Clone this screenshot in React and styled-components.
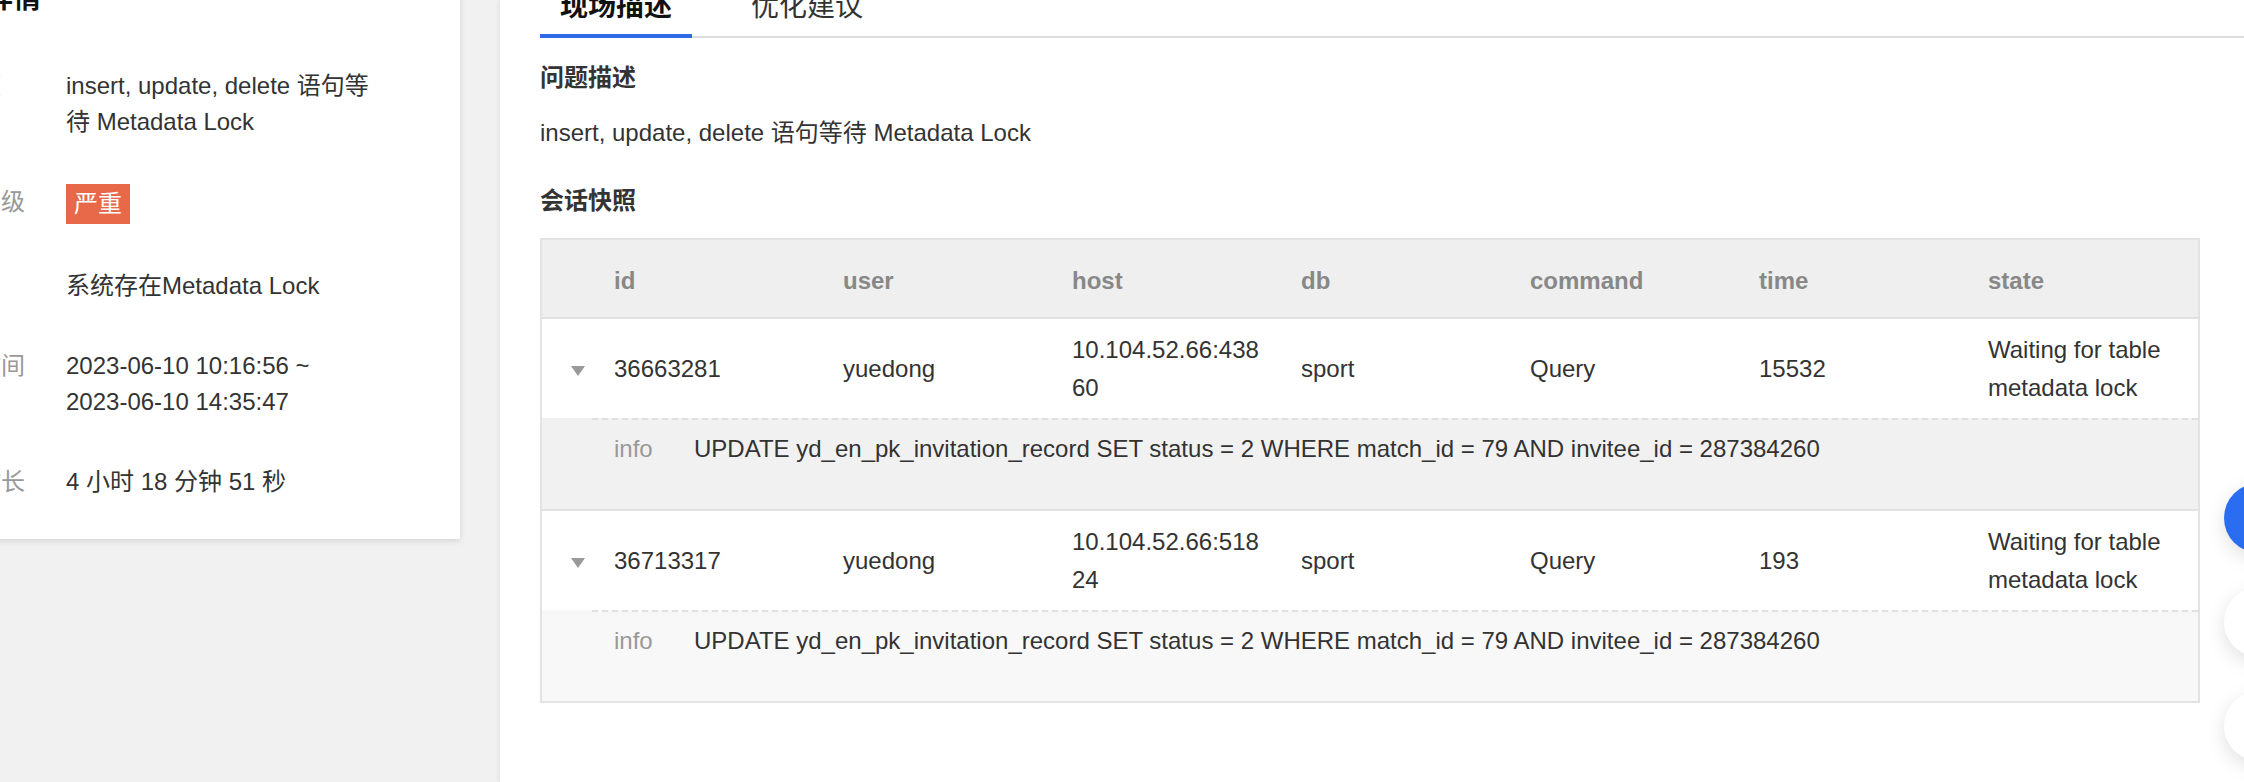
import React from 'react';
import styled, { createGlobalStyle } from 'styled-components';

const GlobalStyle = createGlobalStyle`
  html, body {
    margin: 0;
    padding: 0;
    background: #f1f1f1;
    overflow: hidden;
  }
  body {
    font-family: "Liberation Sans", "Noto Sans CJK SC", sans-serif;
    color: #333;
  }
`;

const details = [
  { label: '诊断项', value: ['insert, update, delete 语句等待 Metadata Lock'] },
  { label: '严重等级', badge: '严重' },
  { label: '描述', value: ['系统存在Metadata Lock'] },
  { label: '发生时间', value: ['2023-06-10 10:16:56 ~', '2023-06-10 14:35:47'], nowrap: true },
  { label: '持续时长', value: ['4 小时 18 分钟 51 秒'] },
];

const columns = ['id', 'user', 'host', 'db', 'command', 'time', 'state'];

const sessions = [
  {
    id: '36663281',
    user: 'yuedong',
    host: '10.104.52.66:43860',
    db: 'sport',
    command: 'Query',
    time: '15532',
    state: 'Waiting for table metadata lock',
    info: 'UPDATE yd_en_pk_invitation_record SET status = 2 WHERE match_id = 79 AND invitee_id = 287384260',
  },
  {
    id: '36713317',
    user: 'yuedong',
    host: '10.104.52.66:51824',
    db: 'sport',
    command: 'Query',
    time: '193',
    state: 'Waiting for table metadata lock',
    info: 'UPDATE yd_en_pk_invitation_record SET status = 2 WHERE match_id = 79 AND invitee_id = 287384260',
  },
];

const App = () => {
  return (
    <Page>
      <GlobalStyle />
      <Sidebar>
        <Card>
          <CardTitle>事件详情</CardTitle>
          <InfoList>
            {details.map((d) => (
              <InfoRow key={d.label}>
                <InfoLabel>{d.label}</InfoLabel>
                {d.badge ? (
                  <Badge>{d.badge}</Badge>
                ) : (
                  <InfoValue>
                    {d.value.map((part, i) => (
                      <React.Fragment key={i}>
                        {i > 0 && ' '}
                        <Part $nowrap={d.nowrap}>{part}</Part>
                      </React.Fragment>
                    ))}
                  </InfoValue>
                )}
              </InfoRow>
            ))}
          </InfoList>
        </Card>
      </Sidebar>

      <Main>
        <TabBar>
          <Tab $active>现场描述</Tab>
          <Tab>优化建议</Tab>
        </TabBar>

        <SectionTitle style={{ marginTop: 22 }}>问题描述</SectionTitle>
        <Paragraph>insert, update, delete 语句等待 Metadata Lock</Paragraph>
        <SectionTitle style={{ marginTop: 32 }}>会话快照</SectionTitle>

        <Table>
          <HeadRow>
            <Cell />
            {columns.map((c) => (
              <HeadCell key={c}>{c}</HeadCell>
            ))}
          </HeadRow>
          {sessions.map((s, i) => (
            <React.Fragment key={s.id}>
              <DataRow>
                <ExpandCell>
                  <Caret />
                </ExpandCell>
                {columns.map((c) => (
                  <Cell key={c}>{s[c]}</Cell>
                ))}
              </DataRow>
              <DetailRow $last={i === sessions.length - 1} $hover={i === 0}>
                <DetailInner>
                  <DetailLabel>info</DetailLabel>
                  <DetailText>{s.info}</DetailText>
                </DetailInner>
              </DetailRow>
            </React.Fragment>
          ))}
        </Table>
      </Main>

      <FabStack>
        <Fab $primary />
        <Fab />
        <Fab />
      </FabStack>
    </Page>
  );
};

const Page = styled.div`
  display: flex;
  height: 782px;
`;

const Sidebar = styled.aside`
  width: 500px;
  flex-shrink: 0;
`;

const Card = styled.section`
  box-sizing: border-box;
  width: 563px;
  margin: -40px 0 0 -103px;
  padding: 18px 0 39px 32px;
  background: #fff;
  box-shadow: 0 2px 6px rgba(0, 0, 0, 0.12);
`;

const CardTitle = styled.h2`
  margin: 0;
  font-size: 28px;
  line-height: 42px;
  font-weight: bold;
  color: #111;
`;

const InfoList = styled.div`
  display: flex;
  flex-direction: column;
  gap: 44px;
  margin-top: 48px;
`;

const InfoRow = styled.div`
  display: grid;
  grid-template-columns: 137px 315px;
  align-items: start;
  font-size: 24px;
  line-height: 36px;
`;

const InfoLabel = styled.div`
  color: #999;
  white-space: nowrap;
`;

const InfoValue = styled.div`
  color: #333;
`;

const Part = styled.span`
  white-space: ${(p) => (p.$nowrap ? 'nowrap' : 'normal')};
`;

const Badge = styled.span`
  justify-self: start;
  height: 40px;
  line-height: 40px;
  padding: 0 8px;
  background: #e8694a;
  color: #fff;
  font-size: 24px;
`;

const Main = styled.main`
  flex: 1;
  min-width: 0;
  background: #fff;
  padding-left: 40px;
  box-shadow: -2px 0 4px rgba(0, 0, 0, 0.05);
`;

const TabBar = styled.div`
  display: flex;
  gap: 39px;
  margin-top: -20px;
  border-bottom: 2px solid #dcdcdc;
`;

const Tab = styled.div`
  width: 152px;
  height: 54px;
  line-height: 54px;
  margin-bottom: -2px;
  text-align: center;
  font-size: 28px;
  font-weight: ${(p) => (p.$active ? 'bold' : 'normal')};
  color: ${(p) => (p.$active ? '#111' : '#333')};
  border-bottom: 4px solid ${(p) => (p.$active ? '#2d6ae3' : 'transparent')};
`;

const SectionTitle = styled.h3`
  margin: 0;
  font-size: 24px;
  line-height: 36px;
  font-weight: bold;
  color: #333;
`;

const Paragraph = styled.p`
  margin: 19px 0 0;
  font-size: 24px;
  line-height: 36px;
  color: #333;
`;

const Table = styled.div`
  margin: 19px 44px 0 0;
  border: 2px solid #e3e3e3;
  font-size: 24px;
  line-height: 38px;
  color: #333;
`;

const grid = `
  display: grid;
  grid-template-columns: 58px repeat(6, 229px) 1fr;
  align-items: center;
`;

const HeadRow = styled.div`
  ${grid}
  height: 73px;
  padding-top: 4px;
  background: #efefef;
  border-bottom: 2px solid #e0e0e0;
`;

const HeadCell = styled.div`
  padding: 0 20px 0 14px;
  font-weight: bold;
  color: #888;
`;

const DataRow = styled.div`
  ${grid}
  height: 99px;
  background: #fff;
`;

const Cell = styled.div`
  padding: 0 20px 0 14px;
  word-break: break-all;
`;

const ExpandCell = styled.div`
  padding-left: 29px;
  display: flex;
  align-items: center;
`;

const Caret = styled.span`
  width: 0;
  height: 0;
  margin-top: 4px;
  border-left: 7px solid transparent;
  border-right: 7px solid transparent;
  border-top: 10px solid #999;
`;

const DetailRow = styled.div`
  padding-left: 50px;
  background: ${(p) => (p.$hover ? '#f1f1f1' : '#f8f8f8')};
  border-bottom: ${(p) => (p.$last ? 'none' : '2px solid #e3e3e3')};
`;

const DetailInner = styled.div`
  display: flex;
  padding: 10px 0 41px 22px;
  border-top: 2px dashed #e0e0e0;
`;

const DetailLabel = styled.span`
  width: 80px;
  flex-shrink: 0;
  color: #999;
`;

const DetailText = styled.span`
  color: #333;
`;

const FabStack = styled.div`
  position: fixed;
  top: 483px;
  right: -50px;
  display: flex;
  flex-direction: column;
  gap: 34px;
`;

const Fab = styled.div`
  width: 70px;
  height: 70px;
  border-radius: 50%;
  background: ${(p) => (p.$primary ? '#2a6df0' : '#fff')};
  box-shadow: 0 6px 20px rgba(0, 0, 0, 0.12);
`;

export default App;
